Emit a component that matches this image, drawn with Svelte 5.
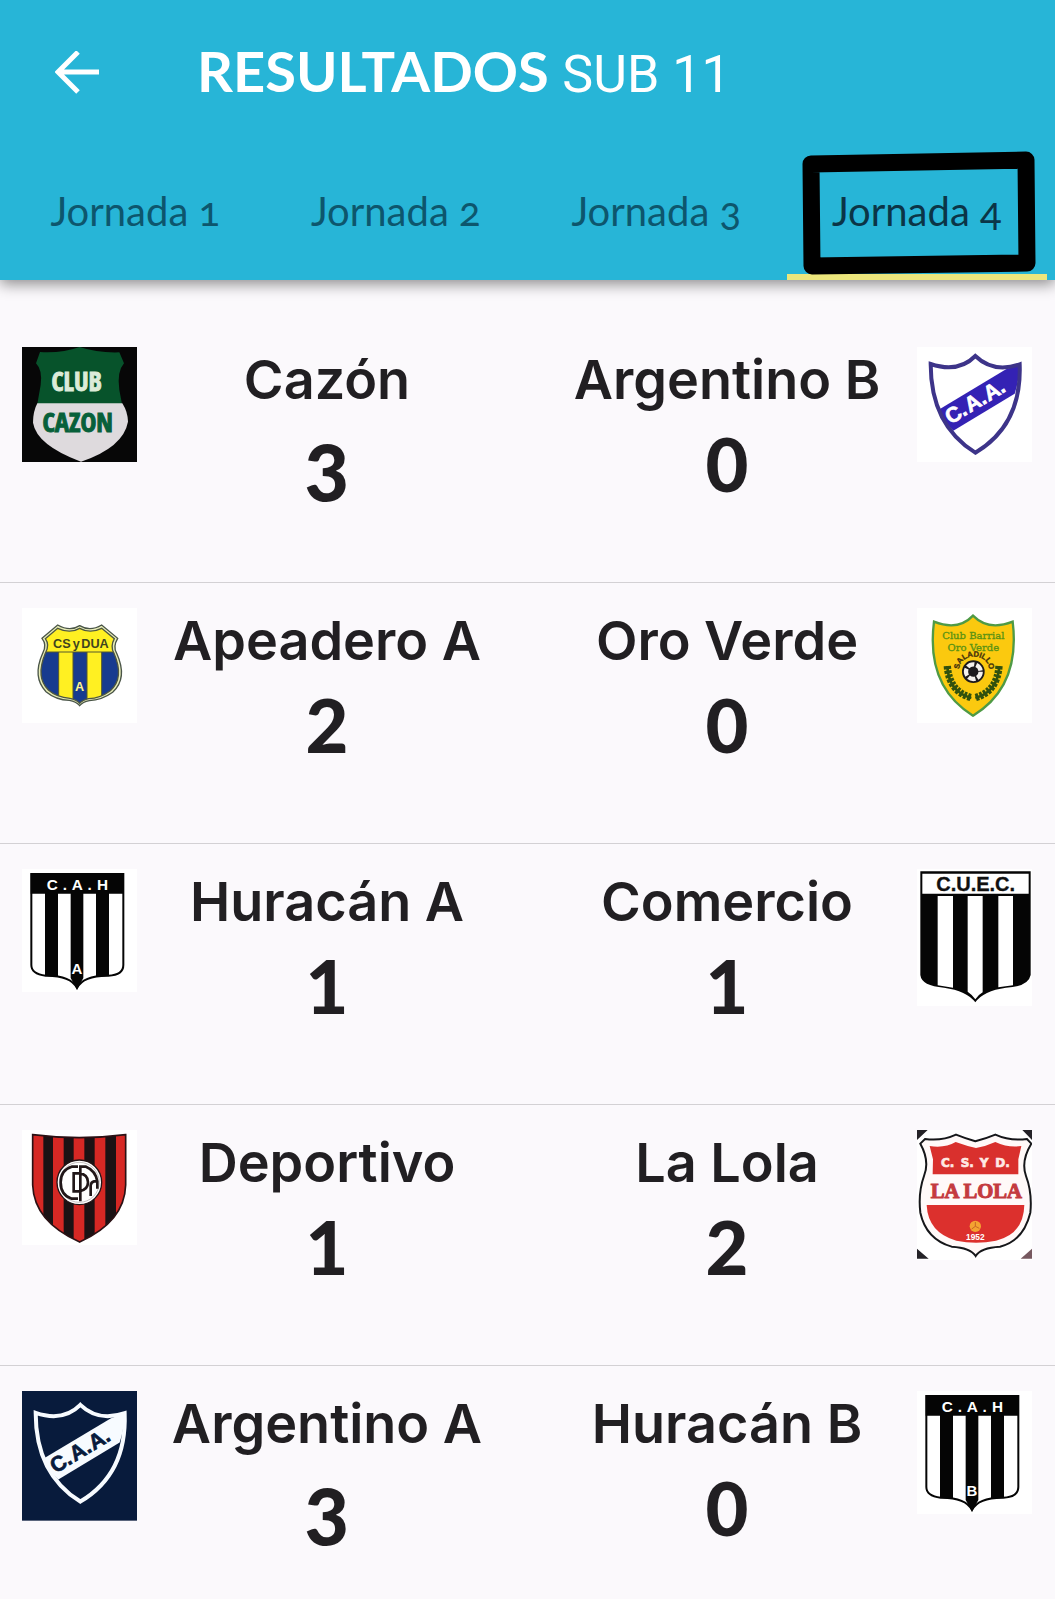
<script lang="ts">
  type Club = { name: string; crest: string; goals: number };

  const rounds = ['Jornada 1', 'Jornada 2', 'Jornada 3', 'Jornada 4'];
  let active = $state(3);

  const matches: { home: Club; away: Club }[] = [
    { home: { name: 'Cazón', crest: 'cazon', goals: 3 }, away: { name: 'Argentino B', crest: 'argentinoB', goals: 0 } },
    { home: { name: 'Apeadero A', crest: 'apeadero', goals: 2 }, away: { name: 'Oro Verde', crest: 'oroVerde', goals: 0 } },
    { home: { name: 'Huracán A', crest: 'huracanA', goals: 1 }, away: { name: 'Comercio', crest: 'comercio', goals: 1 } },
    { home: { name: 'Deportivo', crest: 'deportivo', goals: 1 }, away: { name: 'La Lola', crest: 'laLola', goals: 2 } },
    { home: { name: 'Argentino A', crest: 'argentinoA', goals: 3 }, away: { name: 'Huracán B', crest: 'huracanB', goals: 0 } }
  ];
</script>

{#snippet huracan(letter: string)}
  <svg class="crest" viewBox="66 57 345 370" role="img" aria-label="Escudo Huracán {letter}">
    <rect x="66" y="57" width="345" height="370" fill="#fff" />
    <path d="M94 72H370V345Q370 375 325 377Q250 376 231 414Q212 376 137 377Q94 372 94 345Z" fill="#fff" stroke="#050505" stroke-width="6" />
    <path d="M92 70H372V131H92ZM135 130H174V380Q155 378 135 378ZM212 130H250V384L231 418L212 384ZM288 130H327V378Q305 378 288 380Z" fill="#050505" />
    <g fill="#fff" font-family="Liberation Sans, sans-serif" font-weight="700" font-size="46" text-anchor="middle">
      <text x="157" y="120">C</text><text x="195" y="120">.</text><text x="232" y="120">A</text><text x="269" y="120">.</text><text x="308" y="120">H</text>
      <text x="231" y="371" font-size="45">{letter}</text>
    </g>
  </svg>
{/snippet}

{#snippet argentino(label: string, back: string, line: string, band: string, ink: string, height: number)}
  <svg class="crest" viewBox="51 51 345 {height}" role="img" aria-label={label}>
    <rect x="51" y="51" width="345" height={height} fill={back} />
    <g transform="translate(0 {(height - 345) / 3})">
      <path d="M116 239L318 118L358 104Q358 150 344 191L160 302Q134 278 116 239Z" fill={band} />
      <path d="M92 102Q175 130 226 78Q280 130 359 103Q366 285 226 368Q92 285 92 102Z" fill="none" stroke={line} stroke-width="12" />
      <g transform="rotate(-31 154 285)" fill={ink} stroke={ink} stroke-width="2" font-family="Liberation Sans, sans-serif" font-weight="700" font-size="64">
        <text x="152" y="283">C</text><text x="198" y="283">.</text><text x="220" y="283">A</text><text x="266" y="283">.</text><text x="286" y="283">A</text><text x="332" y="283">.</text>
      </g>
    </g>
  </svg>
{/snippet}

{#snippet crest(kind: string)}
  {#if kind === 'cazon'}
    <svg class="crest" viewBox="66 51 345 345" role="img" aria-label="Escudo Cazón">
      <rect x="66" y="51" width="345" height="345" fill="#070707" />
      <path d="M120 66Q185 70 239 51Q292 69 358 67L372 100Q350 125 358 180L366 222H112L122 165Q128 120 108 100Z" fill="#07532b" />
      <path d="M112 220H367Q383 245 384 275Q370 352 243 395Q110 345 99 278Q99 244 112 220Z" fill="#dedadd" />
      <g font-family="Liberation Sans Narrow, Open Sans Condensed, Liberation Sans, sans-serif" font-weight="700" text-anchor="middle" stroke-width="3">
        <text x="230" y="184" font-size="78" fill="#dcebd8" stroke="#dcebd8">CLUB</text>
        <text x="233" y="305" font-size="80" fill="#07603a" stroke="#07603a">CAZON</text>
      </g>
    </svg>
  {:else if kind === 'argentinoB'}
    {@render argentino('Escudo Argentino B', '#fff', '#3d3489', '#3422b4', '#fff', 345)}
  {:else if kind === 'argentinoA'}
    {@render argentino('Escudo Argentino A', '#081b3c', '#f7fbff', '#f7fbff', '#081b3c', 389)}
  {:else if kind === 'apeadero'}
    <svg class="crest" viewBox="66 54 345 345" role="img" aria-label="Escudo Apeadero A">
      <defs>
        <clipPath id="apeadero-field">
          <path d="M136 146L173 115Q210 132 239 115Q270 132 305 115L343 146Q330 170 342 190Q374 265 331 302Q300 325 266 326Q248 330 239 340Q228 328 210 325Q170 322 145 300Q106 262 136 190Q150 165 136 146Z" />
        </clipPath>
      </defs>
      <rect x="66" y="54" width="345" height="345" fill="#fff" />
      <path d="M126 145L173 105Q210 126 239 107Q270 126 305 105L353 145Q338 170 350 190Q384 265 338 307Q305 331 268 332Q248 336 239 347Q228 334 208 331Q168 330 138 305Q96 262 128 190Q142 165 126 145Z" fill="#e8edb8" stroke="#4a5548" stroke-width="4" />
      <g clip-path="url(#apeadero-field)">
        <rect x="100" y="100" width="280" height="250" fill="#fff022" />
        <path d="M100 186H176V350H100ZM219 186H261V350H219ZM305 186H380V350H305Z" fill="#173b8f" />
        <path d="M100 186H380M176 186V340M219 186V340M261 186V340M305 186V340" stroke="#55582e" stroke-width="3" />
      </g>
      <path d="M136 146L173 115Q210 132 239 115Q270 132 305 115L343 146Q330 170 342 190Q374 265 331 302Q300 325 266 326Q248 330 239 340Q228 328 210 325Q170 322 145 300Q106 262 136 190Q150 165 136 146Z" fill="none" stroke="#4e5742" stroke-width="4" />
      <g font-family="Liberation Sans, sans-serif" font-weight="700">
        <g font-size="38" fill="#3f451f">
          <text x="159" y="174">CS</text><text x="218" y="174">y</text><text x="244" y="174">DUA</text>
        </g>
        <text x="239" y="302" font-size="38" fill="#fff58c" text-anchor="middle">A</text>
      </g>
    </svg>
  {:else if kind === 'oroVerde'}
    <svg class="crest" viewBox="51 54 345 345" role="img" aria-label="Escudo Oro Verde">
      <rect x="51" y="54" width="345" height="345" fill="#fff" />
      <path d="M102 95Q175 124 219 77Q265 124 338 95Q362 290 219 377Q77 290 102 95Z" fill="#fbc90f" stroke="#4f9a45" stroke-width="7" />
      <g font-family="DejaVu Serif, serif" fill="#5c9313" stroke="#5c9313" text-anchor="middle" font-size="30">
        <text x="220" y="146">Club Barrial</text>
        <text x="220" y="183">Oro Verde</text>
      </g>
      <path id="saladillo-arc" d="M178 238A43 36 0 0 1 267 236" fill="none" />
      <text font-family="Liberation Sans, sans-serif" font-weight="700" font-size="23" fill="#43300c" stroke="#43300c"><textPath href="#saladillo-arc">SALADILLO</textPath></text>
      <circle cx="220" cy="245" r="34" fill="#1c1a1c" />
      <circle cx="220" cy="245" r="22" fill="none" stroke="#f4f1ec" stroke-width="13" stroke-dasharray="22 6" />
      <path d="M220 233L232 242L227 256H213L208 242Z" fill="#1c1a1c" />
      <g fill="none" stroke="#31510e">
        <path d="M142 228Q145 305 214 324M298 228Q294 305 226 324" stroke-width="8" />
        <path d="M142 228Q147 304 214 323M297 228Q292 304 226 323" stroke-width="22" stroke-dasharray="9 4" />
      </g>
    </svg>
  {:else if kind === 'huracanA'}
    {@render huracan('A')}
  {:else if kind === 'huracanB'}
    {@render huracan('B')}
  {:else if kind === 'comercio'}
    <svg class="crest" viewBox="51 57 345 411" role="img" aria-label="Escudo Comercio">
      <rect x="51" y="57" width="345" height="411" fill="#fff" />
      <path d="M61 64H392V375Q385 410 318 413Q250 422 226 457Q200 422 132 413Q65 408 61 375Z" fill="#050505" />
      <path d="M67 71H386V131H67ZM113 138H159V413L113 406ZM203 138H248V427Q234 435 226 448Q218 435 203 425ZM295 138H339V406L295 412Z" fill="#fff" />
      <text x="227" y="122" text-anchor="middle" fill="#111" stroke="#111" font-family="Liberation Sans, sans-serif" font-weight="700" font-size="60">C.U.E.C.</text>
    </svg>
  {:else if kind === 'deportivo'}
    <svg class="crest" viewBox="66 60 345 345" role="img" aria-label="Escudo Deportivo">
      <defs>
        <clipPath id="deportivo-field">
          <path d="M98 74Q238 92 377 74V225Q374 335 239 396Q102 335 98 225Z" />
        </clipPath>
      </defs>
      <rect x="66" y="60" width="345" height="345" fill="#fff" />
      <g clip-path="url(#deportivo-field)">
        <rect x="90" y="60" width="300" height="345" fill="#d62824" />
        <path d="M130 60H159V405H130ZM191 60H221V405H191ZM253 60H284V405H253ZM316 60H348V405H316Z" fill="#1b1214" />
      </g>
      <path d="M98 74Q238 92 377 74V225Q374 335 239 396Q102 335 98 225Z" fill="none" stroke="#2b1215" stroke-width="5" />
      <circle cx="238" cy="217" r="67" fill="#fff" stroke="#241416" stroke-width="4" />
      <circle cx="238" cy="217" r="60" fill="none" stroke="#a8a0a2" stroke-width="2" />
      <path d="M234 170H215Q182 180 182 217Q182 256 215 266H234M221 190V244H238Q264 240 264 217Q264 193 238 190ZM241 274V170H258Q287 182 292 214V236M272 258V226Q273 216 282 214H292" fill="none" stroke="#211719" stroke-width="8" />
    </svg>
  {:else if kind === 'laLola'}
    <svg class="crest" viewBox="51 57 345 390" role="img" aria-label="Escudo La Lola">
      <rect x="51" y="57" width="345" height="390" fill="#fff" />
      <path d="M51 57H83L51 87ZM396 57V87L367 57ZM51 413L86 443H51Z" fill="#242227" />
      <path d="M396 413V443H362Z" fill="#76585f" />
      <path d="M75 84Q125 91 168 71Q198 83 226 91Q260 82 286 71Q330 91 381 84L394 98Q362 150 378 195Q397 245 391 305Q370 390 300 407Q242 410 227 435Q211 410 155 407Q78 384 61 305Q54 245 72 195Q90 150 61 98Z" fill="#fff9f8" stroke="#16171a" stroke-width="6" />
      <path d="M89 105Q135 112 167 93Q200 105 228 111Q260 105 286 93Q325 111 364 105L355 145V190H98L99 145Z" fill="#d9302d" />
      <path d="M80 282H373Q371 369 288 389Q228 401 169 389Q84 365 80 282Z" fill="#dc302d" />
      <g font-weight="700">
        <g font-size="36" font-family="DejaVu Sans, sans-serif" fill="#ffe9e4" stroke="#ffe9e4" stroke-width="2">
          <text x="123" y="167">C.</text><text x="182" y="167">S.</text><text x="239" y="167">Y</text><text x="286" y="167">D.</text>
        </g>
        <text x="229" y="261" text-anchor="middle" font-size="62" font-family="Liberation Serif, serif" fill="#c43b3f" stroke="#c43b3f" stroke-width="3">LA LOLA</text>
        <text x="226" y="388" text-anchor="middle" font-size="25" font-family="Liberation Sans, sans-serif" fill="#fff">1952</text>
      </g>
      <circle cx="226" cy="346" r="17" fill="#f4a331" />
      <path d="M226 333V346L215 354M226 346L238 352" fill="none" stroke="#c96724" stroke-width="3" />
    </svg>
  {/if}
{/snippet}

<div class="app">
  <header>
    <div class="bar">
      <button class="back" type="button" aria-label="Volver">
        <svg viewBox="0 0 44 44" aria-hidden="true">
          <path d="M44 21H4M23 1L3 21L23 41" fill="none" stroke="#fff" stroke-width="5" />
        </svg>
      </button>
      <h1>RESULTADOS <span>SUB 11</span></h1>
    </div>
    <nav aria-label="Jornadas">
      {#each rounds as round, i}
        <button class="tab" class:active={i === active} type="button" aria-pressed={i === active} onclick={() => (active = i)}>
          {round}
          {#if i === active}
            <svg class="mark" viewBox="0 0 234 124" aria-hidden="true">
              <path d="M9 13L224 9L225 112L10 115Z" fill="none" stroke="#000" stroke-width="17" stroke-linejoin="round" />
            </svg>
          {/if}
        </button>
      {/each}
    </nav>
  </header>

  <main>
    {#each matches as match}
      <article>
        {@render crest(match.home.crest)}
        <div class="sides">
          {#each [match.home, match.away] as club}
            <section>
              <h2>{club.name}</h2>
              <p><span class:descending={[3, 4, 5, 7, 9].includes(club.goals)}>{club.goals}</span></p>
            </section>
          {/each}
        </div>
        {@render crest(match.away.crest)}
      </article>
    {/each}
  </main>
</div>

<style>
  :global(body) {
    background: #fbf9fc;
  }

  .app {
    color: #211f22;
    font-family: Inter, 'Liberation Sans', sans-serif;
    overflow: hidden;
  }

  header {
    position: relative;
    background: #27b5d7;
    box-shadow: 0 4px 14px rgb(0 0 0 / 45%);
  }

  .bar {
    display: flex;
    align-items: center;
    gap: 98px;
    height: 146px;
    padding: 0 55px;
  }

  button {
    margin: 0;
    padding: 0;
    border: 0;
    background: none;
    font: inherit;
    cursor: pointer;
  }

  .back,
  .back svg {
    display: block;
    width: 44px;
    height: 44px;
  }

  h1 {
    margin: 0;
    color: #fff;
    font-family: Lato, sans-serif;
    font-size: 56px;
    font-weight: 700;
    line-height: 64px;
    white-space: nowrap;
  }

  h1 span {
    font-family: Roboto, sans-serif;
    font-size: 52px;
    font-weight: 400;
  }

  nav {
    display: grid;
    grid-template-columns: repeat(4, 1fr);
    padding: 0 8px 0 5px;
  }

  .tab {
    position: relative;
    height: 134px;
    padding-top: 2px;
    border-bottom: 6px solid transparent;
    color: #0d566d;
    font-family: Lato, sans-serif;
    font-size: 40px;
    font-variant-numeric: oldstyle-nums;
    line-height: 48px;
  }

  .tab.active {
    border-color: #ece67c;
    color: #0b3547;
  }

  .mark {
    position: absolute;
    top: 5px;
    left: 15px;
    width: 234px;
    height: 124px;
  }

  main {
    padding-top: 42px;
  }

  article {
    display: grid;
    grid-template-columns: 115px 1fr 115px;
    align-items: start;
    box-sizing: border-box;
    min-height: 261px;
    padding: 25px 23px 0 22px;
    border-bottom: 1px solid #d3d1d4;
  }

  article:last-child {
    min-height: 234px;
    border-bottom: 0;
  }

  .crest {
    display: block;
    width: 100%;
  }

  .sides {
    display: grid;
    grid-template-columns: 1fr 1fr;
    gap: 20px;
    text-align: center;
  }

  h2 {
    margin: 0;
    font-size: 54px;
    font-weight: 600;
    line-height: 66px;
    white-space: nowrap;
  }

  p {
    margin: 6px 0 0;
    font-family: Lato, sans-serif;
    font-size: 74px;
    font-weight: 900;
    line-height: 90px;
  }

  .descending {
    font-size: 84px;
    font-variant-numeric: oldstyle-nums;
    line-height: 1;
  }
</style>
